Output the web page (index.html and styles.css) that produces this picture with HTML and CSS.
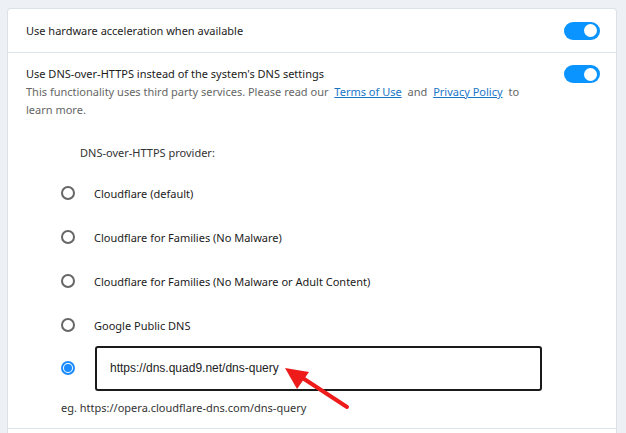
FILE: index.html
```html
<!DOCTYPE html>
<html>
<head>
<meta charset="utf-8">
<link rel="stylesheet" href="styles.css">
</head>
<body>
<div class="card">
  <div class="row row-single">
    <div class="label">Use hardware acceleration when available</div>
    <div class="toggle"><span class="knob"></span></div>
  </div>
  <div class="row row-multi">
    <div class="text-block">
      <div class="label">Use DNS-over-HTTPS instead of the system's DNS settings</div>
      <div class="sub">This functionality uses third party services. Please read our <a class="link">Terms of Use</a> and <a class="link">Privacy Policy</a> to learn more.</div>
    </div>
    <div class="toggle"><span class="knob"></span></div>
  </div>
  <div class="provider">
    <div class="provider-title">DNS-over-HTTPS provider:</div>
    <div class="options">
      <div class="option"><span class="radio"></span><span class="opt-label">Cloudflare (default)</span></div>
      <div class="option"><span class="radio"></span><span class="opt-label">Cloudflare for Families (No Malware)</span></div>
      <div class="option"><span class="radio"></span><span class="opt-label">Cloudflare for Families (No Malware or Adult Content)</span></div>
      <div class="option"><span class="radio"></span><span class="opt-label">Google Public DNS</span></div>
      <div class="option option-custom"><span class="radio checked"></span><div class="input">https://dns.quad9.net/dns-query</div></div>
    </div>
    <div class="example">eg. https://opera.cloudflare-dns.com/dns-query</div>
  </div>
  <div class="bottom-sep"></div>
  <svg class="arrow" width="90" height="60" viewBox="0 0 90 60">
    <line x1="12" y1="8" x2="64" y2="42" stroke="#ee1b1b" stroke-width="4" stroke-linecap="round"/>
    <polygon points="2,3 26,7 14,24" fill="#ee1b1b"/>
  </svg>
</div>
</body>
</html>
```
FILE: styles.css
```css
html, body {
  margin: 0;
  padding: 0;
}
body {
  background: #edf1f5;
  font-family: "Segoe UI", "Noto Sans", "Open Sans", sans-serif;
  font-size: 11px;
  color: #1c1c1c;
  padding: 8px 9px 0 7px;
  width: 626px;
  height: 433px;
  box-sizing: border-box;
  overflow: hidden;
}
.card {
  position: relative;
  background: #fff;
  border: 1px solid #dbe2ea;
  border-bottom: none;
  border-radius: 4px 4px 0 0;
  height: 440px;
  box-sizing: border-box;
}
.row {
  display: flex;
  justify-content: space-between;
  padding: 0 16px 0 18px;
}
.row-single {
  height: 43px;
  align-items: center;
  border-bottom: 1px solid #dde4eb;
}
.row-multi {
  padding-top: 12px;
  align-items: flex-start;
}
.label {
  line-height: 18px;
}
.text-block {
  width: 512px;
}
.sub {
  color: #666;
  line-height: 17.5px;
}
.link {
  color: #1876c8;
  text-decoration: underline;
  margin: 0 3px;
}
.toggle {
  width: 36px;
  height: 18px;
  border-radius: 9px;
  background: #0a94ff;
  display: flex;
  align-items: center;
  justify-content: flex-end;
  padding-right: 3px;
  box-sizing: border-box;
  flex-shrink: 0;
}
.knob {
  width: 13px;
  height: 13px;
  border-radius: 50%;
  background: #fff;
}
.provider {
  padding: 26px 0 0 0;
}
.provider-title {
  padding-left: 72px;
  line-height: 18px;
  color: #333;
}
.options {
  margin-top: 9px;
}
.option {
  display: flex;
  align-items: center;
  height: 44px;
  padding-left: 53px;
}
.radio {
  width: 14px;
  height: 14px;
  border: 2px solid #666;
  border-radius: 50%;
  box-sizing: border-box;
  flex-shrink: 0;
}
.radio.checked {
  border-color: #1a8cff;
  display: flex;
  align-items: center;
  justify-content: center;
}
.radio.checked::after {
  content: "";
  width: 8px;
  height: 8px;
  border-radius: 50%;
  background: #1a8cff;
}
.opt-label {
  margin-left: 19px;
}
.option-custom {
  height: 46px;
  margin-top: -2px;
}
.input {
  margin-left: 20px;
  width: 447px;
  height: 45px;
  border: 2px solid #1a1a1a;
  border-radius: 3px;
  box-sizing: border-box;
  display: flex;
  align-items: center;
  padding-left: 13px;
  font-family: "Liberation Sans", Arial, sans-serif;
  font-size: 12px;
  color: #222;
}
.example {
  padding-left: 53px;
  margin-top: 8px;
  line-height: 18px;
  color: #333;
}
.bottom-sep {
  margin-top: 11px;
  border-top: 1px solid #dde4eb;
}
.arrow {
  position: absolute;
  left: 275px;
  top: 356px;
}
```
